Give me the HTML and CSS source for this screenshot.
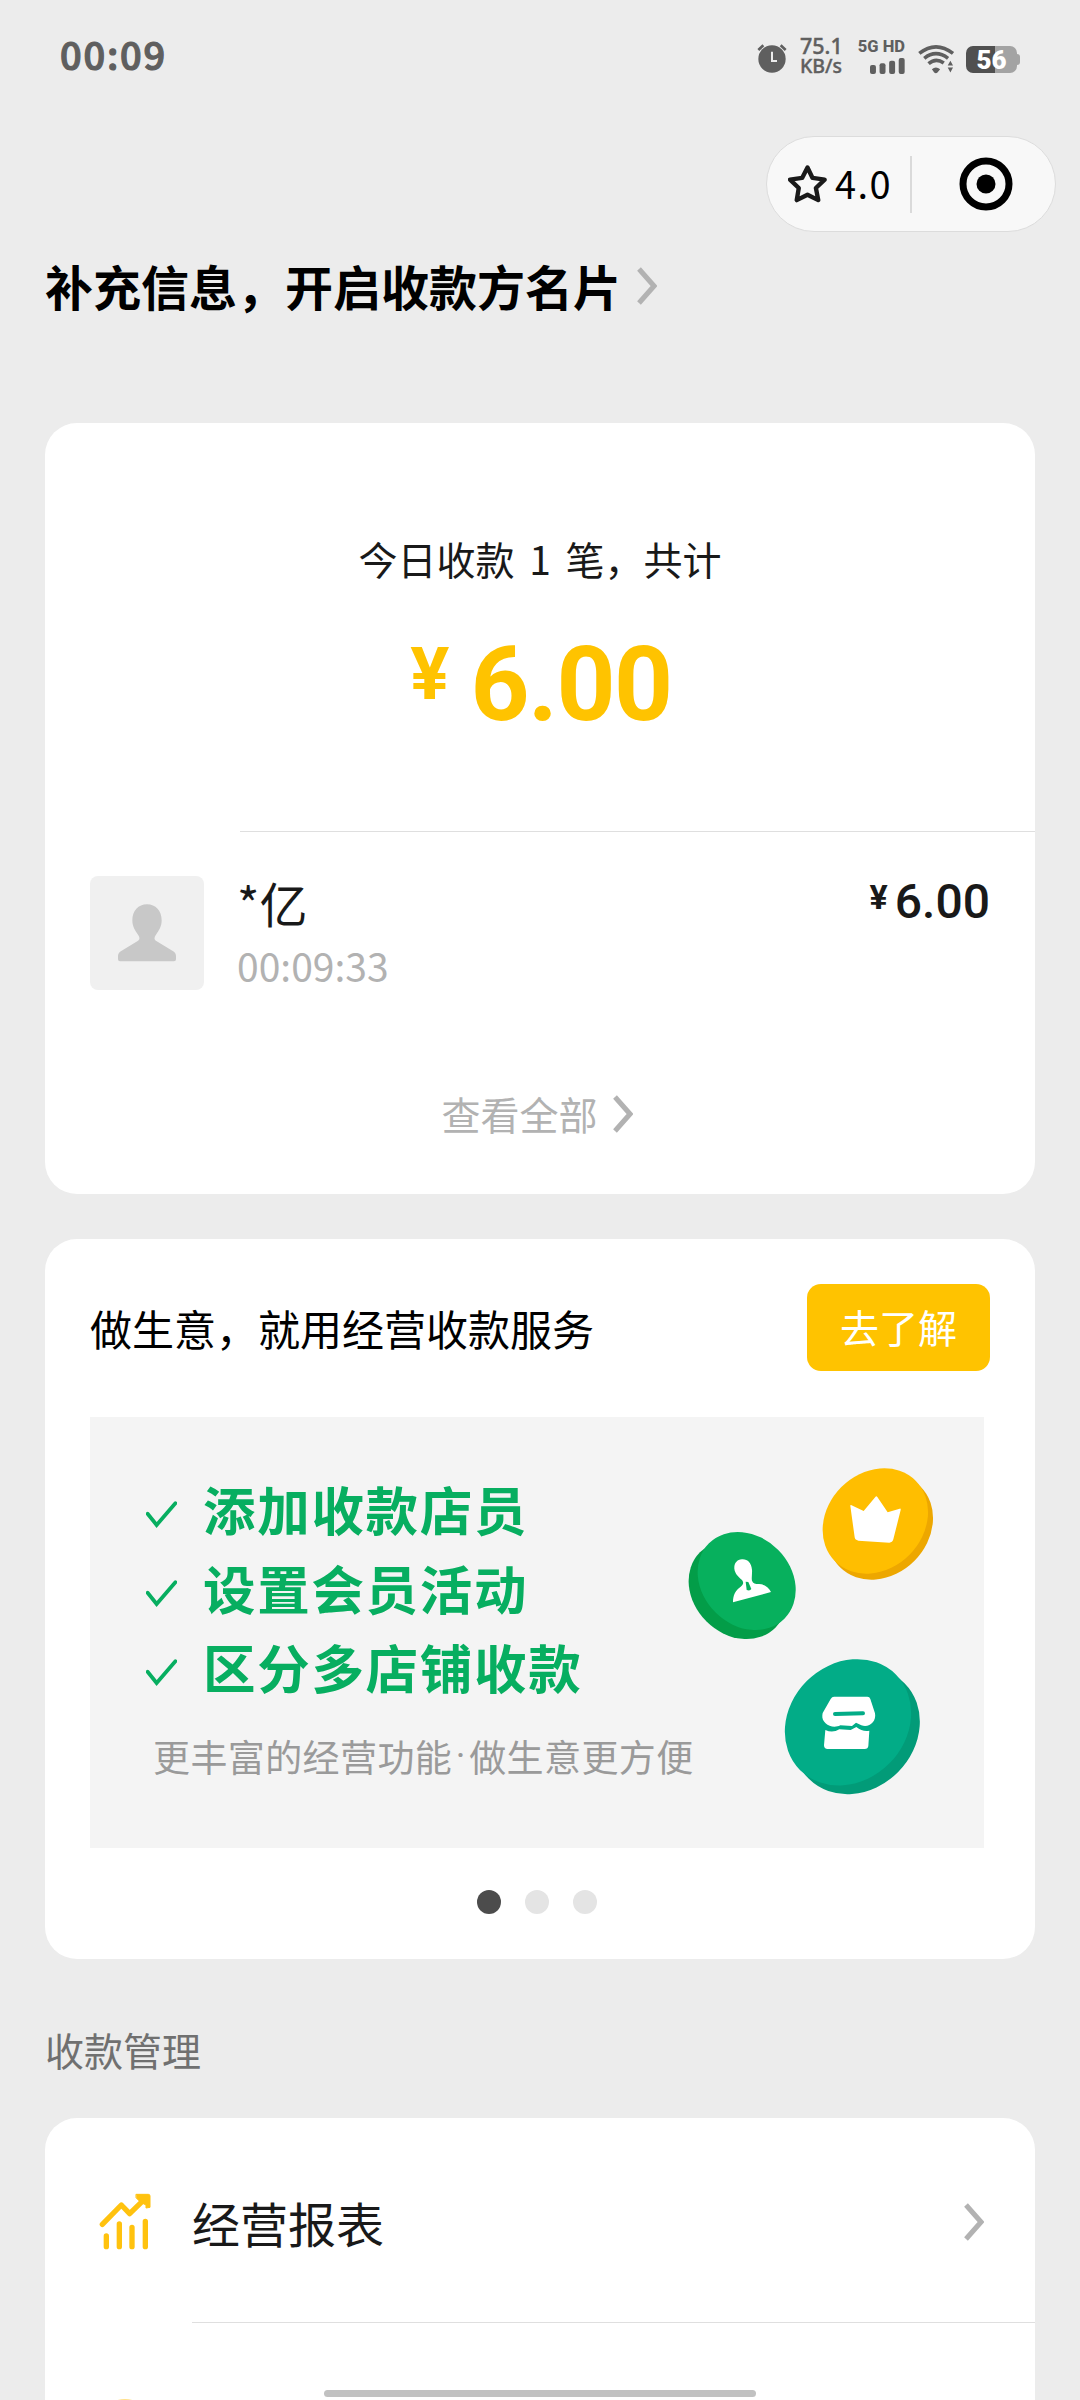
FILE: index.html
```html
<!DOCTYPE html>
<html lang="zh-CN">
<head>
<meta charset="utf-8">
<title>收款小账本</title>
<link rel="stylesheet" href="styles.css">
</head>
<body>
<div class="screen">
  <header class="status">
    <span class="status-time">00:09</span>
    <div class="status-icons">
      <svg class="alarm" viewBox="0 0 90 90">
        <circle cx="45" cy="48" r="41"/>
        <path class="bell" d="M4 21 19 7M71 7 86 21"/>
        <path class="hands" d="M45 26V54H60"/>
      </svg>
      <div class="speed"><span>75.1</span><span>KB/s</span></div>
      <div class="cell">
        <span>5G HD</span>
        <svg class="bars" viewBox="0 0 106 48"><rect x="0" y="21" width="18" height="27" rx="6"/><rect x="29" y="16" width="18" height="32" rx="6"/><rect x="58" y="8" width="18" height="40" rx="6"/><rect x="87" y="0" width="18" height="48" rx="6"/></svg>
      </div>
      <svg class="wifi" viewBox="0 0 112 90">
        <path class="arc" d="M4 28Q54 -12 106 28M19 43Q54 15 91 43M32 59Q54 40 78 57"/>
        <path d="M42 76Q54 66 67 76L59 86Q54 90 49 86ZM90 65 98 50 106 65ZM90 71 98 86 106 71Z"/>
      </svg>
      <div class="battery"><span>56</span></div>
    </div>
  </header>

  <nav class="nav">
    <div class="capsule">
      <svg class="star" viewBox="0 0 116 112"><path d="M58 7 73 38 109 43 83 68 90 104 58 88 26 104 32 68 6 43 42 38Z"/></svg>
      <span class="score">4.0</span>
      <i class="split"></i>
      <svg class="target" viewBox="0 0 54 54"><circle class="ring" cx="27" cy="27" r="23"/><circle cx="27" cy="27" r="9.5"/></svg>
    </div>
  </nav>

  <h1 class="headline"><span>补充信息，开启收款方名片</span><svg class="chevron" viewBox="0 0 20 38"><path d="M2 2 17 19 2 36"/></svg></h1>

  <section class="card today">
    <p class="summary">今日收款 1 笔，共计</p>
    <p class="total"><span class="yen">¥</span><span>6.00</span></p>
    <div class="record">
      <svg class="avatar" viewBox="0 0 342 342"><path d="M171 85C145 85 127 105 127 133C127 151 135 164 144 176C150 185 150 190 143 195L95 224Q84 230 84 240V250Q84 256 90 256H252Q258 256 258 250V240Q258 230 247 224L199 195C192 190 192 185 198 176C207 164 215 151 215 133C215 105 197 85 171 85Z"/></svg>
      <div class="payer"><span class="name">*亿</span><span class="time">00:09:33</span></div>
      <p class="amount"><span class="yen">¥</span><span>6.00</span></p>
    </div>
    <a class="all"><span>查看全部</span><svg class="chevron" viewBox="0 0 20 38"><path d="M2 2 17 19 2 36"/></svg></a>
  </section>

  <section class="card service">
    <div class="service-head"><h2>做生意，就用经营收款服务</h2><span class="button">去了解</span></div>
    <div class="banner">
      <div class="pitch">
        <ul class="features">
          <li><svg viewBox="0 0 82 72"><path d="M4 34 28 64 78 6"/></svg>添加收款店员</li>
          <li><svg viewBox="0 0 82 72"><path d="M4 34 28 64 78 6"/></svg>设置会员活动</li>
          <li><svg viewBox="0 0 82 72"><path d="M4 34 28 64 78 6"/></svg>区分多店铺收款</li>
        </ul>
        <p class="note"><span>更丰富的经营功能</span><i>·</i><span>做生意更方便</span></p>
      </div>
      <svg class="coins" viewBox="0 -69 972 1293">
        <ellipse class="green-edge" cx="233" cy="450" rx="160" ry="133" transform="rotate(45 233 450)"/>
        <ellipse class="green" cx="260" cy="423" rx="160" ry="133" transform="rotate(45 260 423)"/>
        <path class="mark" d="M246 358C230 359 222 371 223 386C225 402 236 411 246 420C252 427 250 434 242 440C226 452 219 465 219 487L333 456C327 441 311 432 297 432C286 432 279 430 276 422C274 413 277 402 276 389C274 369 263 357 246 358Z"/>
        <path class="green" d="M257 425 265 426 274 447Q270 454 260 450Z"/>
        <ellipse class="gold-edge" cx="661" cy="261" rx="171" ry="144" transform="rotate(-45 661 261)"/>
        <ellipse class="gold" cx="646" cy="243" rx="171" ry="144" transform="rotate(-45 646 243)"/>
        <path class="mark" d="M573 195 611 213 646 171Q649 167 652 171L683 217 719 206Q723 205 722 210L700 298Q697 308 688 308L595 302Q585 300 584 292L571 198Q571 194 573 195Z"/>
        <ellipse class="teal-edge" cx="590" cy="873" rx="203" ry="175" transform="rotate(-45 590 873)"/>
        <ellipse class="teal" cx="564" cy="847" rx="203" ry="175" transform="rotate(-45 564 847)"/>
        <path class="mark" d="M522 770H622Q629 770 631 777L645 820C650 846 626 865 604 856L588 848 576 858 541 856C516 869 484 850 487 826Q487 819 491 814L512 777Q516 770 522 770Z"/>
        <path class="slot" d="M525 822 609 820"/>
        <path class="mark" d="M496 870Q518 880 538 868L572 870 589 861Q608 876 628 872L625 918Q624 927 614 927H503Q492 927 492 916Z"/>
      </svg>
    </div>
    <div class="pager"><i class="on"></i><i></i><i></i></div>
  </section>

  <h3 class="section-title">收款管理</h3>
  <section class="card menu">
    <a class="item">
      <svg class="chart" viewBox="165 570 180 195"><path d="M187 673 244 615 269 641 313 598M199 708V740M238 672V740M276 682V740M316 664V740"/><path class="tip" d="M289 583H325Q330 583 330 588V622L318 624V615L302 607 289 594Z"/></svg>
      <div class="item-body"><span>经营报表</span><svg class="chevron" viewBox="0 0 20 38"><path d="M2 2 17 19 2 36"/></svg></div>
    </a>
    <a class="item next"><svg class="peek" viewBox="0 0 60 60"><circle cx="30" cy="30" r="28"/></svg></a>
  </section>
  <div class="home-bar"></div>
</div>
</body>
</html>
```
FILE: styles.css
```css
* { box-sizing: border-box; margin: 0; padding: 0; }
body {
  background: #ececec;
  color: #191919;
  font-family: "Noto Sans CJK SC", sans-serif;
}
.screen {
  position: relative;
  width: 1080px;
  height: 2400px;
  padding: 0 45px;
  overflow: hidden;
}
svg { display: block; flex: none; }
i { font-style: normal; }

/* status bar */
.status {
  display: flex;
  justify-content: space-between;
  align-items: flex-start;
  height: 136px;
  padding: 36px 15px 0;
  color: #5f5f5f;
  fill: #5f5f5f;
}
.status-time { font-size: 38px; line-height: 36px; font-weight: 500; letter-spacing: 1.8px; -webkit-text-stroke: 1.2px #5f5f5f; }
.status-icons { display: flex; align-items: flex-start; }
.alarm { width: 30px; height: 30px; margin-top: 7px; }
.alarm path { fill: none; stroke: #5f5f5f; stroke-width: 8; }
.alarm .hands { stroke: #ececec; stroke-width: 6; }
.speed {
  display: flex;
  flex-direction: column;
  width: 46px;
  margin-left: 13px;
  font: 500 21.5px/20px "Noto Sans", sans-serif;
  white-space: nowrap;
  -webkit-text-stroke: 0.4px #5f5f5f;
}
.speed span:last-child { font-size: 19.5px; }
.cell {
  display: flex;
  flex-direction: column;
  align-items: flex-end;
  width: 48px;
  margin-left: 11px;
  font-family: Roboto, sans-serif;
  font-size: 16.5px;
  line-height: 22px;
  font-weight: 800;
  white-space: nowrap;
}
.bars { width: 35px; height: 16px; }
.wifi { width: 37px; height: 30px; margin: 8px 0 0 13px; }
.wifi .arc { fill: none; stroke: #5f5f5f; stroke-width: 11; }
.battery {
  position: relative;
  width: 51px;
  height: 27px;
  margin: 10px 3px 0 11px;
  border-radius: 7px;
  background: linear-gradient(90deg, #505050 29px, #a3a3a3 29px);
  color: #fff;
  font: 900 26px/28px Roboto, sans-serif;
  text-align: center;
}
.battery::after {
  content: "";
  position: absolute;
  left: 51px;
  top: 8px;
  width: 3px;
  height: 11px;
  border-radius: 0 3px 3px 0;
  background: #a3a3a3;
}

/* mini-program capsule */
.nav { display: flex; justify-content: flex-end; margin-right: -21px; }
.capsule {
  display: flex;
  align-items: center;
  width: 290px;
  height: 96px;
  padding-left: 21px;
  border: 1.5px solid #dcdcdc;
  border-radius: 48px;
  background: #f8f8f8;
}
.star { width: 39px; height: 38px; }
.star path { fill: none; stroke: #1a1a1a; stroke-width: 13; stroke-linejoin: round; }
.score { width: 72px; margin: -3px 0 0 8px; font-size: 38px; line-height: 40px; letter-spacing: 1.4px; color: #000; }
.split { width: 2px; height: 57px; margin-left: 3px; background: #dadada; }
.target { width: 54px; height: 54px; margin-left: 47px; }
.ring { fill: none; stroke: #000; stroke-width: 7; }

.chevron { width: 20px; height: 38px; fill: none; stroke: #b2b2b2; stroke-width: 5; }
.headline {
  display: flex;
  align-items: center;
  gap: 16px;
  height: 64px;
  margin: 21px 0 106px;
  font-size: 48px;
  line-height: 64px;
  font-weight: 700;
  color: #000;
}
.headline .chevron { margin-top: 2px; }

.card { border-radius: 32px; background: #fff; }

/* today's income */
.today { height: 771px; padding-top: 107px; }
.summary { font-size: 39px; line-height: 56px; text-align: center; word-spacing: 6px; }
.total {
  display: flex;
  justify-content: center;
  height: 245px;
  padding-top: 48px;
  gap: 21px;
  color: #ffc300;
  font: 700 103px/101px Roboto, sans-serif;
}
.total span:last-child { margin-right: -2px; letter-spacing: -1.5px; }
.total .yen { margin-top: 3px; font-size: 73px; line-height: 74px; }
.record {
  position: relative;
  display: flex;
  align-items: flex-start;
  height: 211px;
  padding: 45px 45px 0;
}
.record::before {
  content: "";
  position: absolute;
  top: 0;
  left: 195px;
  right: 0;
  height: 1px;
  background: #dfdfdf;
}
.avatar { width: 114px; height: 114px; border-radius: 8px; background: #f0f0f0; fill: #c8c8c8; }
.payer { display: flex; flex-direction: column; margin-left: 33px; }
.name { font-size: 48px; line-height: 52px; }
.time { margin-top: 9px; font-size: 39px; line-height: 56px; color: #b2b2b2; }
.amount { display: flex; margin-left: auto; gap: 7px; font: 500 48px/52px Roboto, sans-serif; }
.amount .yen { font-size: 34px; line-height: 43px; font-weight: 700; }
.all {
  display: flex;
  align-items: center;
  justify-content: center;
  gap: 15px;
  height: 142px;
  padding-right: 6px;
  font-size: 39px;
  line-height: 56px;
  color: #b2b2b2;
}
.all .chevron { margin-top: 2px; }

/* service promotion */
.service { height: 720px; margin-top: 45px; padding: 45px 45px 0; }
.service-head { display: flex; align-items: center; justify-content: space-between; height: 87px; }
.service-head h2 { font-size: 42px; line-height: 60px; font-weight: 400; color: #000; }
.button {
  height: 87px;
  padding: 0 33px;
  border-radius: 14px;
  background: #ffc300;
  color: #fff;
  font-size: 39px;
  line-height: 85px;
}
.banner { display: grid; width: 894px; height: 431px; margin-top: 46px; background: #f4f4f4; }
.pitch, .coins { grid-area: 1 / 1; }
.pitch { padding: 52px 0 0 56px; }
.features { list-style: none; color: #07ae60; }
.features li {
  display: flex;
  align-items: center;
  gap: 26px;
  height: 79px;
  font-size: 52.5px;
  line-height: 79px;
  font-weight: 700;
  letter-spacing: 1.7px;
}
.features svg { width: 31px; height: 27px; margin-top: 12px; fill: none; stroke: #07ae60; stroke-width: 10; stroke-linecap: round; }
.note { display: flex; margin: 22px 0 0 7px; font-size: 37px; line-height: 56px; letter-spacing: 0.4px; color: #9a9a9a; }
.note i { width: 17px; font-family: Roboto, sans-serif; text-align: center; }
.coins { justify-self: end; width: 324px; height: 431px; }
.mark { fill: #fff; }
.green { fill: #07b05d; }
.green-edge { fill: #039d48; }
.gold { fill: #ffbe00; }
.gold-edge { fill: #eda700; }
.teal { fill: #02ac87; }
.teal-edge { fill: #029b78; }
.slot { stroke: #02ac87; stroke-width: 12; stroke-linecap: round; }
.pager { display: flex; justify-content: center; gap: 24px; margin-top: 42px; padding-right: 6px; }
.pager i { width: 24px; height: 24px; border-radius: 50%; background: #e4e4e4; }
.pager .on { background: #4c4c4c; }

/* management menu */
.section-title { margin: 62px 0 40px; font-size: 39px; line-height: 57px; font-weight: 400; color: #707070; }
.menu { height: 420px; }
.item { display: flex; height: 205px; }
.chart { width: 60px; height: 65px; margin: 72px 0 0 50px; }
.chart path { fill: none; stroke: #ffc20e; stroke-width: 16; stroke-linecap: round; stroke-linejoin: round; }
.chart .tip { fill: #ffc20e; stroke-width: 3; }
.item-body {
  display: flex;
  flex: 1;
  align-items: center;
  justify-content: space-between;
  margin-left: 37px;
  padding: 3px 51px 0 0;
  border-bottom: 1px solid #dfdfdf;
  font-size: 48px;
}
.peek { width: 60px; height: 60px; margin: 74px 0 0 50px; fill: #ffe08a; }
.home-bar {
  position: absolute;
  left: 324px;
  top: 2390px;
  width: 432px;
  height: 7px;
  border-radius: 4px;
  background: #c1c1c1;
}
```
